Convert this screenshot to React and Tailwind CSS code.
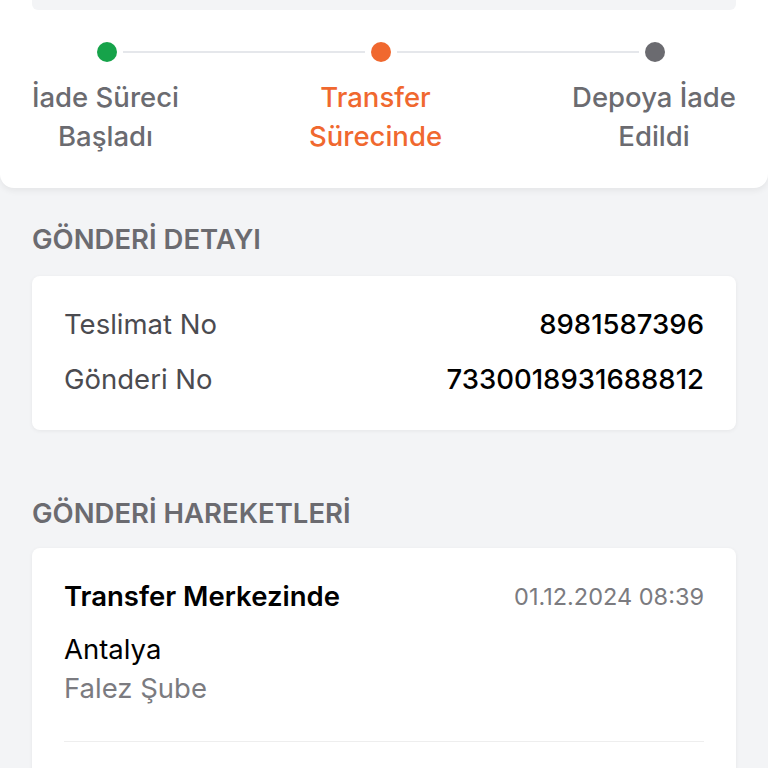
export default function App() {
  const font = { fontFamily: "Inter, 'Noto Sans', sans-serif" };
  return (
    <div className="w-[768px] h-[768px] overflow-hidden bg-[#f3f4f6]" style={font}>
      <div className="bg-white rounded-b-[14px] shadow-[0_3px_6px_rgba(0,0,0,0.06)] h-[188px] px-8">
        <div className="h-[10px] bg-[#f3f4f6] rounded-b-[6px]" />
        <div className="flex items-center pl-[65px] pr-[71px] pt-[32px]">
          <div className="w-5 h-5 rounded-full bg-[#16a34a] shrink-0" />
          <div className="flex-1 h-[2px] bg-[#e5e7eb] mx-[6px]" />
          <div className="w-5 h-5 rounded-full bg-[#f0682f] shrink-0" />
          <div className="flex-1 h-[2px] bg-[#e5e7eb] mx-[6px]" />
          <div className="w-5 h-5 rounded-full bg-[#6b6b70] shrink-0" />
        </div>
        <div className="flex justify-between mt-[16px] text-[27.5px] leading-[39px] font-medium text-center">
          <div className="text-[#6b6b70]">İade Süreci<br />Başladı</div>
          <div className="text-[#f0682f]">Transfer<br />Sürecinde</div>
          <div className="text-[#6b6b70]">Depoya İade<br />Edildi</div>
        </div>
      </div>

      <div className="px-8">
        <div className="mt-[36px] text-[27.5px] leading-[30px] font-semibold text-[#6b6b70]">GÖNDERİ DETAYI</div>
        <div className="mt-[22px] bg-white rounded-[8px] shadow-[0_1px_4px_rgba(0,0,0,0.06)] px-8 pt-[32px] pb-[34px] flex flex-col gap-[22px] text-[27.5px] leading-[33px]">
          <div className="flex justify-between">
            <span className="text-[#4b4b50]">Teslimat No</span>
            <span className="text-black font-medium">8981587396</span>
          </div>
          <div className="flex justify-between">
            <span className="text-[#4b4b50]">Gönderi No</span>
            <span className="text-black font-medium">7330018931688812</span>
          </div>
        </div>

        <div className="mt-[68px] text-[27.5px] leading-[30px] font-semibold text-[#6b6b70]">GÖNDERİ HAREKETLERİ</div>
        <div className="mt-[20px] bg-white rounded-[8px] shadow-[0_1px_4px_rgba(0,0,0,0.06)] px-8 pt-[32px] h-[300px]">
          <div className="flex justify-between items-center">
            <span className="text-[27.5px] leading-[33px] font-semibold text-black">Transfer Merkezinde</span>
            <span className="text-[23.5px] leading-[33px] text-[#7b7b80]">01.12.2024 08:39</span>
          </div>
          <div className="mt-[20px] text-[27.5px] leading-[33px] text-black">Antalya</div>
          <div className="mt-[6px] text-[27.5px] leading-[33px] text-[#7b7b80]">Falez Şube</div>
          <div className="mt-[36px] h-px bg-[#eeeeee]" />
        </div>
      </div>
    </div>
  );
}
